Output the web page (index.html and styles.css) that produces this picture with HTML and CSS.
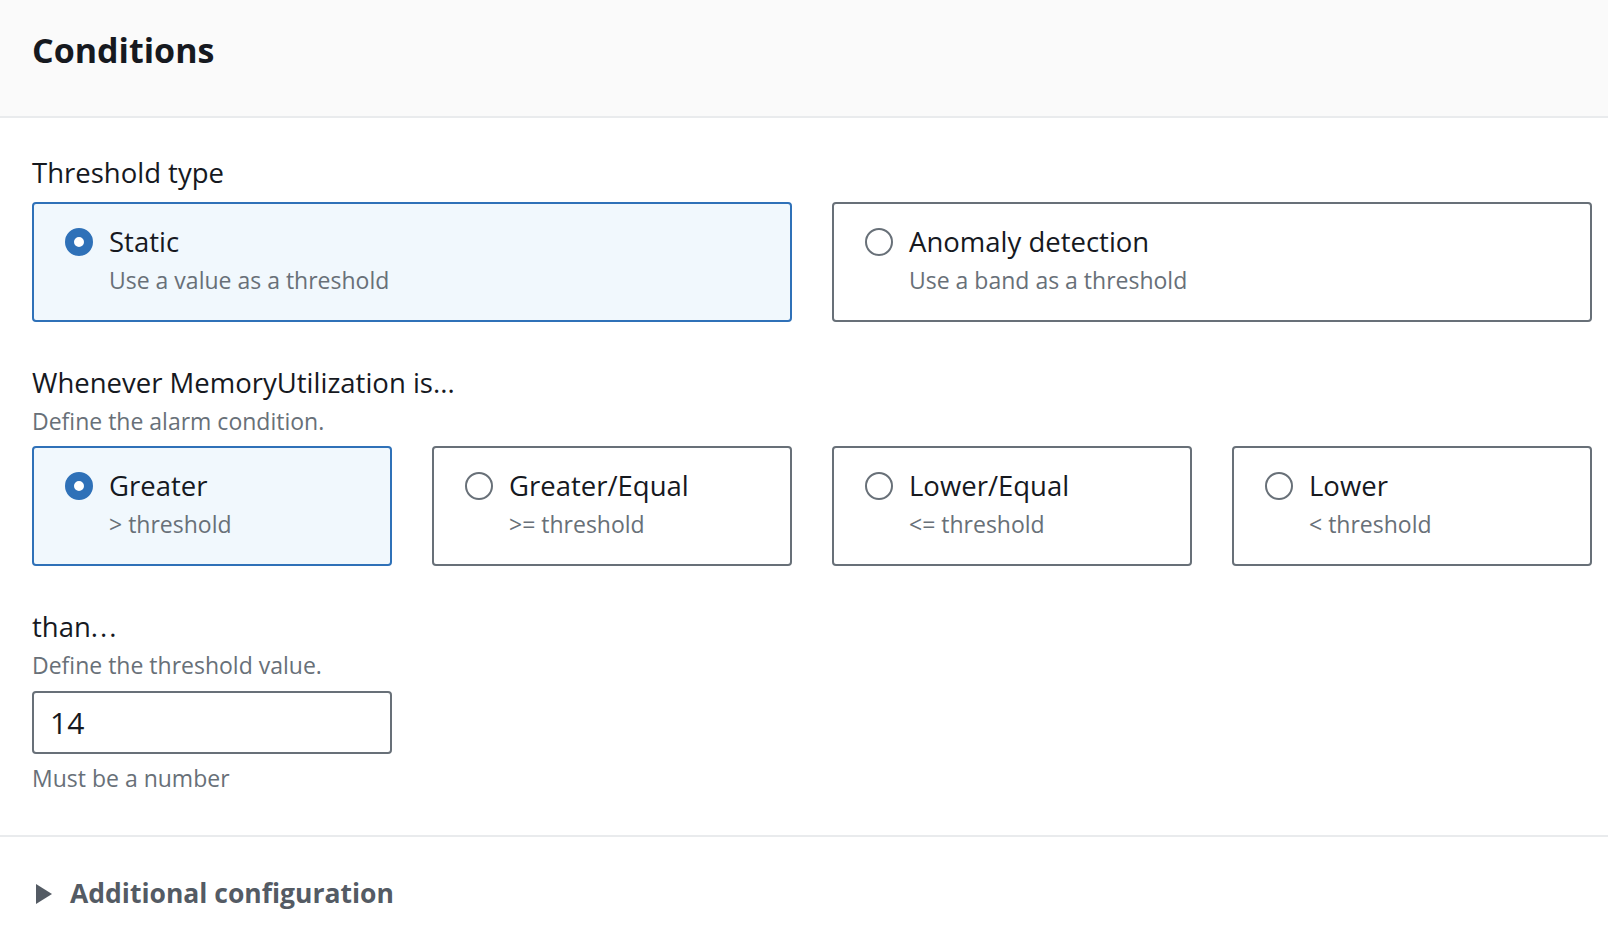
FILE: index.html
```html
<!DOCTYPE html>
<html lang="en">
<head>
<meta charset="utf-8">
<title>Conditions</title>
<link rel="stylesheet" href="styles.css">
</head>
<body>
<div class="panel">
  <header class="panel-header">
    <h2 class="panel-title">Conditions</h2>
  </header>
  <div class="panel-body">
    <div class="field">
      <div class="field-label">Threshold type</div>
      <div class="tiles tiles-2">
        <label class="tile selected">
          <span class="radio"><svg width="28" height="28" viewBox="0 0 28 28"><circle cx="14" cy="14" r="9.5" fill="#fff" stroke="#2f71b8" stroke-width="9"/></svg></span>
          <span class="tile-text"><span class="tile-title">Static</span><span class="tile-desc">Use a value as a threshold</span></span>
        </label>
        <label class="tile">
          <span class="radio"><svg width="28" height="28" viewBox="0 0 28 28"><circle cx="14" cy="14" r="13" fill="#fff" stroke="#687078" stroke-width="2"/></svg></span>
          <span class="tile-text"><span class="tile-title">Anomaly detection</span><span class="tile-desc">Use a band as a threshold</span></span>
        </label>
      </div>
    </div>

    <div class="field">
      <div class="field-label">Whenever MemoryUtilization is...</div>
      <div class="field-desc">Define the alarm condition.</div>
      <div class="tiles tiles-4">
        <label class="tile selected">
          <span class="radio"><svg width="28" height="28" viewBox="0 0 28 28"><circle cx="14" cy="14" r="9.5" fill="#fff" stroke="#2f71b8" stroke-width="9"/></svg></span>
          <span class="tile-text"><span class="tile-title">Greater</span><span class="tile-desc">&gt; threshold</span></span>
        </label>
        <label class="tile">
          <span class="radio"><svg width="28" height="28" viewBox="0 0 28 28"><circle cx="14" cy="14" r="13" fill="#fff" stroke="#687078" stroke-width="2"/></svg></span>
          <span class="tile-text"><span class="tile-title">Greater/Equal</span><span class="tile-desc">&gt;= threshold</span></span>
        </label>
        <label class="tile">
          <span class="radio"><svg width="28" height="28" viewBox="0 0 28 28"><circle cx="14" cy="14" r="13" fill="#fff" stroke="#687078" stroke-width="2"/></svg></span>
          <span class="tile-text"><span class="tile-title">Lower/Equal</span><span class="tile-desc">&lt;= threshold</span></span>
        </label>
        <label class="tile">
          <span class="radio"><svg width="28" height="28" viewBox="0 0 28 28"><circle cx="14" cy="14" r="13" fill="#fff" stroke="#687078" stroke-width="2"/></svg></span>
          <span class="tile-text"><span class="tile-title">Lower</span><span class="tile-desc">&lt; threshold</span></span>
        </label>
      </div>
    </div>

    <div class="field">
      <div class="field-label">than<span class="dots">...</span></div>
      <div class="field-desc">Define the threshold value.</div>
      <div class="input-wrap"><div class="input">14</div></div>
      <div class="field-hint">Must be a number</div>
    </div>
  </div>
  <div class="panel-footer">
    <div class="expander">
      <svg class="caret" width="16" height="20" viewBox="0 0 16 20"><path d="M0 0 L16 10 L0 20 Z" fill="#545b64"/></svg>
      <span class="expander-label">Additional configuration</span>
    </div>
  </div>
</div>
</body>
</html>
```

FILE: styles.css
```css
* { box-sizing: border-box; }
html, body { margin: 0; padding: 0; background: #ffffff; }
body {
  font-family: "Open Sans", "Noto Sans", sans-serif;
  color: #16191f;
  width: 1608px;
  height: 926px;
  overflow: hidden;
}
.panel-header {
  background: #fafafa;
  height: 118px;
  border-bottom: 2px solid #e9ebed;
  padding: 26px 32px 0 32px;
}
.panel-title {
  margin: 0;
  font-size: 34px;
  line-height: 48px;
  font-weight: 700;
  color: #16191f;
}
.panel-body {
  padding: 35px 16px 41px 32px;
  border-bottom: 2px solid #e9ebed;
}
.field { margin-bottom: 41px; }
.field:last-child { margin-bottom: 0; }
.field-label {
  font-size: 27.5px;
  line-height: 40px;
}
.dots { letter-spacing: 2px; }
.field-desc, .field-hint {
  font-size: 23px;
  line-height: 32px;
  color: #687078;
  margin-top: 2px;
}
.tiles {
  display: grid;
  gap: 40px;
  margin-top: 9px;
}
.tiles-2 { grid-template-columns: 1fr 1fr; }
.tiles-4 { grid-template-columns: repeat(4, 1fr); margin-top: 9px; }
.tile {
  display: flex;
  align-items: flex-start;
  gap: 16px;
  height: 120px;
  padding: 18px 30px 0 31px;
  border: 2px solid #687078;
  border-radius: 4px;
  background: #fff;
}
.tile.selected {
  border-color: #2f71b8;
  background: #f1f8fd;
}
.radio {
  display: flex;
  width: 28px;
  height: 28px;
  margin-top: 6px;
  flex: none;
}
.tile-text { display: flex; flex-direction: column; }
.tile-title {
  font-size: 27.5px;
  line-height: 40px;
  color: #16191f;
}
.tile-desc {
  font-size: 23px;
  line-height: 32px;
  color: #687078;
  margin-top: 2px;
}
.input-wrap { width: 360px; margin-top: 10px; }
.input {
  height: 63px;
  border: 2px solid #687078;
  border-radius: 4px;
  padding: 0 16px;
  font-size: 30px;
  line-height: 59px;
  color: #16191f;
}
.field-hint { margin-top: 8px; }
.panel-footer {
  padding: 36px 32px 0 36px;
}
.expander {
  display: flex;
  align-items: center;
  gap: 18px;
  height: 40px;
}
.caret { flex: none; margin-top: 2px; }
.expander-label {
  font-size: 26.5px;
  line-height: 40px;
  font-weight: 700;
  color: #545b64;
}
```
